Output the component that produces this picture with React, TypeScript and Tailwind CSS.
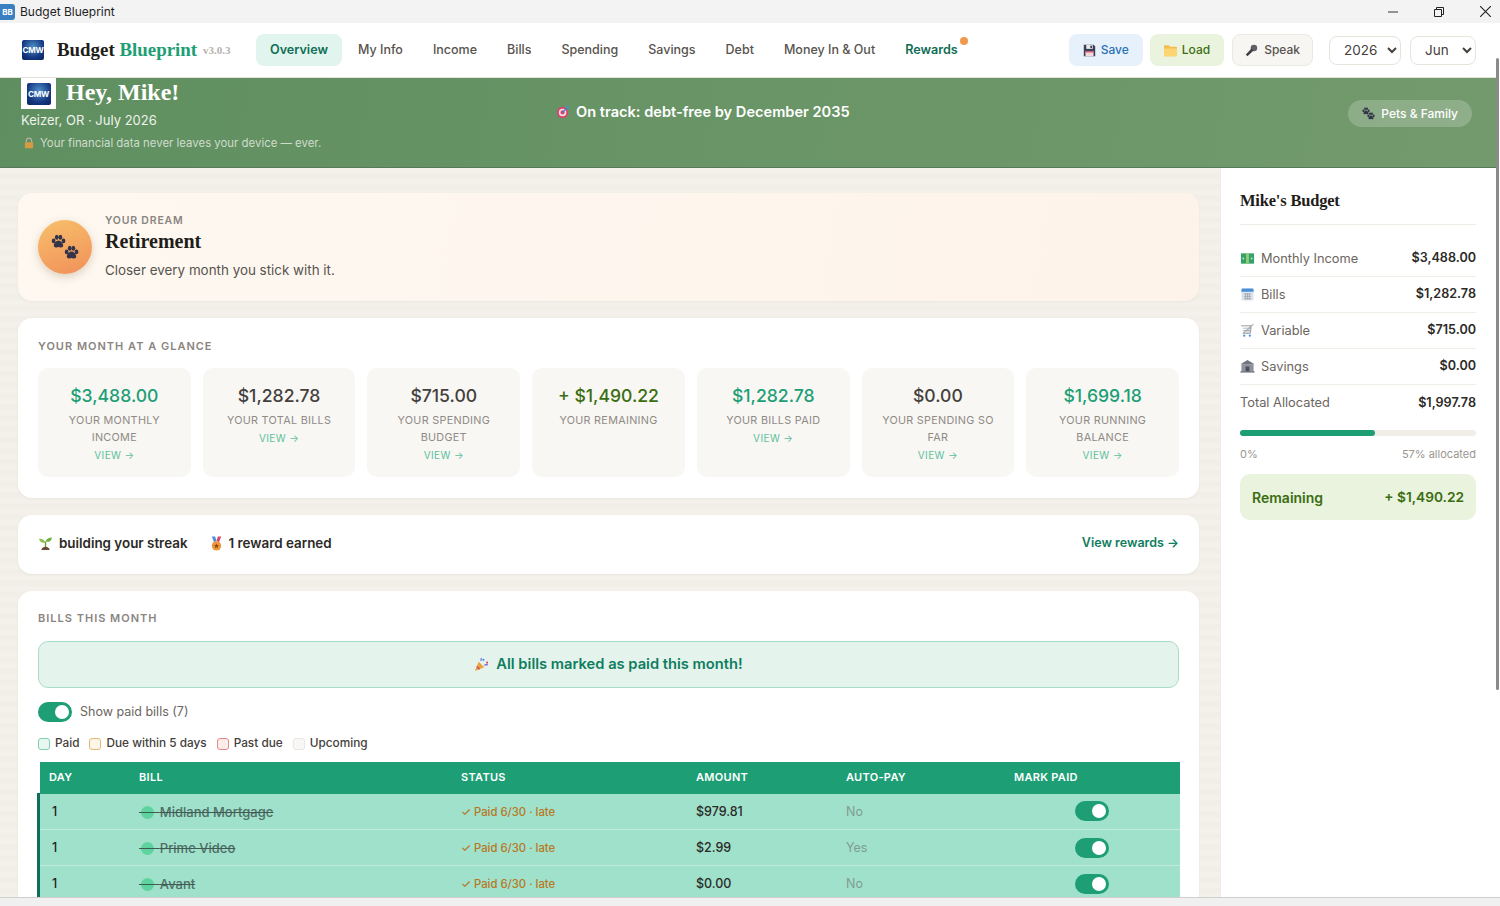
import type { ReactNode } from 'react';

const sans = 'font-[Inter,sans-serif]';
const serif = "font-['Liberation_Serif',serif]";

const navItems = ['My Info', 'Income', 'Bills', 'Spending', 'Savings', 'Debt', 'Money In & Out'];

const glance = [
  { value: '$3,488.00', label: 'YOUR MONTHLY INCOME', color: 'text-[#1d9e75]', view: true },
  { value: '$1,282.78', label: 'YOUR TOTAL BILLS', color: 'text-[#44403c]', view: true },
  { value: '$715.00', label: 'YOUR SPENDING BUDGET', color: 'text-[#44403c]', view: true },
  { value: '+ $1,490.22', label: 'YOUR REMAINING', color: 'text-[#3b6d11]', view: false },
  { value: '$1,282.78', label: 'YOUR BILLS PAID', color: 'text-[#1d9e75]', view: true },
  { value: '$0.00', label: 'YOUR SPENDING SO FAR', color: 'text-[#44403c]', view: true },
  { value: '$1,699.18', label: 'YOUR RUNNING BALANCE', color: 'text-[#1d9e75]', view: true },
];

const bills = [
  { name: 'Midland Mortgage', amount: '$979.81', auto: 'No' },
  { name: 'Prime Video', amount: '$2.99', auto: 'Yes' },
  { name: 'Avant', amount: '$0.00', auto: 'No' },
];

const Paw = ({ className, color = '#33344a' }: { className?: string; color?: string }) => (
  <svg viewBox="0 0 24 24" className={className} fill={color}>
    <ellipse cx="4.2" cy="11" rx="3" ry="3.8" />
    <ellipse cx="9.2" cy="5.2" rx="3" ry="4" />
    <ellipse cx="15" cy="5.2" rx="3" ry="4" />
    <ellipse cx="20" cy="11" rx="3" ry="3.8" />
    <path d="M12 10.5c-3.8 0-7.5 4.500-7.500 8 0 2.800 2.600 3.500 4.200 3 1-.3 2.200-.8 3.300-.8s2.300.5 3.300.8c1.600.5 4.200-.2 4.200-3 0-3.500-3.700-8-7.500-8z" />
  </svg>
);

const Paws = ({ size }: { size: 'sm' | 'lg' }) =>
  size === 'lg' ? (
    <span className="relative block h-[26px] w-[28px]">
      <Paw className="absolute left-0 top-0 h-[15px] w-[15px]" />
      <Paw className="absolute bottom-0 right-0 h-[15px] w-[15px]" />
    </span>
  ) : (
    <span className="relative block h-[13px] w-[13px]">
      <Paw className="absolute left-0 top-0 h-[8px] w-[8px]" />
      <Paw className="absolute bottom-0 right-0 h-[8px] w-[8px]" />
    </span>
  );

const CmwLogo = ({ className }: { className: string }) => (
  <div className={`flex items-center justify-center rounded-[2px] bg-[radial-gradient(circle_at_50%_35%,#4f8fc9,#12357f_65%,#0d2460)] ${className}`}>
    <span className={`${sans} text-[8px] font-bold leading-none tracking-[-0.3px] text-white`}>CMW</span>
  </div>
);

const Floppy = () => (
  <svg viewBox="0 0 16 16" className="h-[13px] w-[13px]">
    <path d="M1 1h12l2 2v12H1z" fill="#3a3f55" />
    <rect x="4" y="1" width="8" height="5" fill="#e8e8ee" />
    <rect x="9" y="2" width="2" height="3" fill="#3a3f55" />
    <rect x="3" y="9" width="10" height="6" fill="#f2d7dc" />
    <rect x="3" y="9" width="10" height="1.4" fill="#d9455f" />
  </svg>
);

const Folder = () => (
  <svg viewBox="0 0 16 16" className="h-[13px] w-[13px]">
    <path d="M0 2.500a1 1 0 0 1 1-1h5l1.500 2H15a1 1 0 0 1 1 1V14a1 1 0 0 1-1 1H1a1 1 0 0 1-1-1z" fill="#f5bd4f" />
    <path d="M0 5.500h16V14a1 1 0 0 1-1 1H1a1 1 0 0 1-1-1z" fill="#fcd471" />
  </svg>
);

const Mic = () => (
  <svg viewBox="0 0 16 16" className="h-[13px] w-[13px]">
    <circle cx="11" cy="5" r="4" fill="#5f5f68" />
    <path d="M8 5.500 1 13l2 2 7.500-7z" fill="#3f3f46" />
  </svg>
);

const Target = () => (
  <svg viewBox="0 0 16 16" className="h-[14px] w-[14px]">
    <circle cx="7.5" cy="8.500" r="6.500" fill="#d6456b" />
    <circle cx="7.5" cy="8.500" r="4.300" fill="#f5dfe6" />
    <circle cx="7.5" cy="8.500" r="2.400" fill="#d6456b" />
    <path d="M7.500 8.500 13 3" stroke="#3b82c4" strokeWidth="1.5" />
    <path d="M12 1.500l2.500 2.500" stroke="#3b9ae1" strokeWidth="2" />
  </svg>
);

const Lock = () => (
  <svg viewBox="0 0 16 16" className="h-[12px] w-[12px]">
    <path d="M4.500 7V5a3.500 3.500 0 0 1 7 0v2" fill="none" stroke="#b8b0a0" strokeWidth="1.5" />
    <rect x="2.5" y="7" width="11" height="8" rx="1" fill="#d69a45" />
  </svg>
);

const Money = () => (
  <svg viewBox="0 0 16 16" className="h-[15px] w-[15px]">
    <rect x="1" y="2.500" width="14" height="11" fill="#36a269" />
    <rect x="6.5" y="2.500" width="3" height="11" fill="#8fcf7c" />
    <circle cx="3.5" cy="8" r="1" fill="#b9e6c4" />
    <circle cx="12.5" cy="8" r="1" fill="#b9e6c4" />
  </svg>
);

const Calendar = () => (
  <svg viewBox="0 0 16 16" className="h-[15px] w-[15px]">
    <rect x="1.5" y="1.500" width="13" height="13" rx="1.5" fill="#dfe3ea" />
    <path d="M1.500 3a1.500 1.500 0 0 1 1.500-1.500h10A1.500 1.500 0 0 1 14.500 3v2h-13z" fill="#4a90d9" />
    <path d="M4 7.500h8M4 10h8M4 12.500h8M6 6.500v7M8 6.500v7M10 6.500v7" stroke="#9ca3af" strokeWidth="0.8" />
  </svg>
);

const Cart = () => (
  <svg viewBox="0 0 16 16" className="h-[15px] w-[15px]">
    <path d="M1 3h11l2.500-1.500M12 3l-1 8H3z" fill="#d6d9de" stroke="#9aa0a8" strokeWidth="1" />
    <path d="M3 5.500h9M3 8h8.500" stroke="#9aa0a8" strokeWidth="0.8" />
    <circle cx="4.5" cy="13.500" r="1.2" fill="#4a90d9" />
    <circle cx="10.5" cy="13.500" r="1.2" fill="#4a90d9" />
  </svg>
);

const Bank = () => (
  <svg viewBox="0 0 16 16" className="h-[15px] w-[15px]">
    <path d="M8 1 15.500 5.500H.5z" fill="#6f7480" />
    <rect x="1.5" y="5.500" width="13" height="8" fill="#8d929c" />
    <rect x="6" y="8" width="4" height="5.500" fill="#4b4f59" />
    <rect x="0.5" y="13" width="15" height="1.5" fill="#6f7480" />
  </svg>
);

const Seedling = () => (
  <svg viewBox="0 0 16 16" className="h-[15px] w-[15px]">
    <path d="M8 12V6" stroke="#6b9e3a" strokeWidth="1.5" />
    <path d="M8 7C6.500 3.500 3.500 3 1 3c.5 3 3 5 7 4z" fill="#8cc152" />
    <path d="M8 6c.8-3 3.500-4.500 7-4.500C14.500 5 12 7 8 6z" fill="#76b041" />
    <path d="M3.500 15c.5-2.500 2.500-3.500 4.500-3.500s4 1 4.500 3.500z" fill="#6b4a33" />
  </svg>
);

const Medal = () => (
  <svg viewBox="0 0 16 16" className="h-[15px] w-[15px]">
    <path d="M3 .5h3.500L8 5 5.500 7z" fill="#4a90d9" />
    <path d="M13 .5H9.500L8 5l2.500 2z" fill="#d6456b" />
    <circle cx="8" cy="10.500" r="5" fill="#f0963d" />
    <path d="M8 8l.8 1.700 1.800.2-1.300 1.300.3 1.800L8 12.100l-1.600.9.300-1.800-1.300-1.300 1.800-.2z" fill="#8a4e14" />
  </svg>
);

const Popper = () => (
  <svg viewBox="0 0 16 16" className="h-[15px] w-[15px]">
    <path d="M1 15 5 5l6 6z" fill="#e8a33d" />
    <path d="M3 10l3 3" stroke="#d6456b" strokeWidth="1.5" />
    <circle cx="10" cy="3" r="1.2" fill="#4a90d9" />
    <circle cx="14" cy="6" r="1.1" fill="#d6456b" />
    <path d="M7 4c1-1 1-2 .5-3M11 9c1-1 2.500-1 4-.5" fill="none" stroke="#7b5cd6" strokeWidth="1.2" />
  </svg>
);

const Toggle = () => (
  <span className="flex h-[20px] w-[34px] shrink-0 items-center justify-end rounded-full bg-[#1d9e75] pr-[3px]">
    <span className="h-[14px] w-[14px] rounded-full bg-white" />
  </span>
);

const Card = ({ className = '', children }: { className?: string; children: ReactNode }) => (
  <section className={`rounded-[14px] bg-white shadow-[0_1px_3px_rgba(60,50,30,0.05)] ${className}`}>{children}</section>
);

const SectionLabel = ({ children }: { children: ReactNode }) => (
  <div className="text-[11px] font-semibold leading-[14px] tracking-[1px] text-[#8a8580]">{children}</div>
);

const Legend = ({ border, fill, label }: { border: string; fill: string; label: string }) => (
  <span className="flex items-center gap-[5px]">
    <span className={`h-[12px] w-[12px] rounded-[3px] border-[1.5px] ${border} ${fill}`} />
    <span className="text-[11.8px] font-medium text-[#44403c]">{label}</span>
  </span>
);

const SideRow = ({ icon, label, value }: { icon?: ReactNode; label: string; value: string }) => (
  <div className="flex h-[36px] items-center justify-between border-b border-[#f1eee8] last:border-b-0">
    <span className="flex items-center gap-[6px] text-[12.8px] text-[#6b6560]">
      {icon}
      {label}
    </span>
    <span className="text-[12.6px] font-semibold text-[#2c2a26]">{value}</span>
  </div>
);

export default function App() {
  return (
    <div className={`${sans} flex h-[906px] w-[1500px] flex-col overflow-hidden bg-white text-[#2c2a26]`}>
      {/* window title bar */}
      <div className="flex h-[23px] shrink-0 items-center justify-between bg-[#f3f3f3]">
        <div className="flex items-center gap-[5px]">
          <span className="flex h-[16px] w-[15px] items-center justify-center rounded-r-[3px] bg-[#3a7fc1] text-[8px] font-bold text-white">BB</span>
          <span className="text-[12px] text-[#1f1f1f]">Budget Blueprint</span>
        </div>
        <div className="flex items-center gap-[36px] pr-[9px]">
          <svg viewBox="0 0 10 10" className="h-[10px] w-[10px]"><path d="M0 5h10" stroke="#333" strokeWidth="1" /></svg>
          <svg viewBox="0 0 10 10" className="h-[10px] w-[10px]"><path d="M.5 2.500h7v7h-7zM2.500 2.500v-2h7v7h-2" fill="none" stroke="#222" strokeWidth="1" /></svg>
          <svg viewBox="0 0 10 10" className="h-[11px] w-[11px]"><path d="M0 0l10 10M10 0 0 10" stroke="#222" strokeWidth="1" /></svg>
        </div>
      </div>

      <div className="flex min-h-0 flex-1">
        <div className="flex min-w-0 flex-1 flex-col">
          {/* nav */}
          <header className="flex h-[55px] shrink-0 items-center border-b border-[#e4e2da] bg-white pl-[22px] pr-[20px]">
            <CmwLogo className="h-[20px] w-[22px]" />
            <span className={`${serif} ml-[13px] w-[146px] whitespace-nowrap text-[18.9px] font-bold leading-none text-[#1f1d1a]`}>
              Budget <span className="text-[#1d9e75]">Blueprint</span>
            </span>
            <span className={`${serif} w-[53px] text-[11px] font-bold text-[#b5b1ab]`}>v3.0.3</span>
            <nav className="flex items-center gap-[2px]">
              <a className="flex h-[32px] items-center rounded-[8px] bg-[#e1f5ee] px-[14px] text-[12.6px] font-semibold text-[#0f6e56]">Overview</a>
              {navItems.map((item) => (
                <a key={item} className="flex h-[32px] items-center px-[14px] text-[12.5px] font-medium text-[#57534e]">{item}</a>
              ))}
              <a className="relative flex h-[32px] items-center px-[14px] text-[12.6px] font-semibold text-[#0f6e56]">
                Rewards
                <span className="absolute right-[4px] top-[3px] h-[8px] w-[8px] rounded-full bg-[#f0994b]" />
              </a>
            </nav>
            <div className="ml-auto flex items-center">
              <button className="flex h-[32px] items-center gap-[5px] rounded-[8px] bg-[#e6f1fb] px-[14px] text-[12px] font-medium text-[#2a72b5]"><Floppy />Save</button>
              <button className="ml-[7px] flex h-[32px] items-center gap-[5px] rounded-[8px] bg-[#eaf3de] px-[14px] text-[12px] font-medium text-[#3b6d11]"><Folder />Load</button>
              <button className="ml-[8px] flex h-[32px] items-center gap-[6px] rounded-[8px] border border-[#ece9e2] bg-[#f7f6f3] px-[12px] text-[12px] font-medium text-[#57534e]"><Mic />Speak</button>
              <select defaultValue="2026" className="ml-[16px] h-[29px] w-[72px] rounded-[8px] border border-[#e7e4dc] bg-white pl-[10px] text-[13.5px] text-[#44403c]"><option>2026</option></select>
              <select defaultValue="Jun" className="ml-[9px] h-[29px] w-[66px] rounded-[8px] border border-[#e7e4dc] bg-white pl-[10px] text-[13.5px] text-[#44403c]"><option>Jun</option></select>
            </div>
          </header>

          {/* hero */}
          <div className="flex h-[90px] shrink-0 items-center border-b border-[#55795a] bg-[linear-gradient(100deg,#5f8f60,#739a6d)] pl-[21px] pr-[24px] text-white">
            <div className="w-[535px] self-start">
              <div className="flex items-start">
                <div className="flex h-[31px] w-[35px] items-center justify-center bg-white">
                  <CmwLogo className="h-[22px] w-[24px]" />
                </div>
                <span className={`${serif} ml-[10px] text-[24px] font-bold leading-[28px]`}>Hey, Mike!</span>
              </div>
              <div className="mt-[3px] text-[13px] leading-[16px] text-[#eef3ec]">Keizer, OR · July 2026</div>
              <div className="mt-[8px] flex items-center gap-[5px] pl-[2px] text-[11.4px] leading-[14px] text-[#cfdccb]"><Lock />Your financial data never leaves your device — ever.</div>
            </div>
            <div className="-mt-[20px] flex items-center gap-[6px] text-[14.6px] font-semibold"><Target />On track: debt-free by December 2035</div>
            <div className="ml-auto -mt-[18px] flex h-[27px] items-center gap-[6px] rounded-full bg-white/20 px-[14px] text-[12px] font-medium"><Paws size="sm" />Pets &amp; Family</div>
          </div>

          <div className="flex min-h-0 flex-1">
            {/* main column */}
            <main className="flex min-w-0 flex-1 flex-col gap-[17px] overflow-hidden bg-[repeating-linear-gradient(180deg,#f4f1eb_0px,#f4f1eb_5px,#f1eee7_6px,#f2efe9_11px)] pl-[18px] pr-[21px] pt-[25px]">
              <Card className="flex h-[108px] shrink-0 items-center gap-[13px] bg-[linear-gradient(100deg,#fef8f1,#fef3ea)] pl-[20px]">
                <div className="flex h-[54px] w-[54px] items-center justify-center rounded-full bg-[linear-gradient(160deg,#f8c06a,#f0905a)] shadow-[0_3px_8px_rgba(120,90,40,0.25)]">
                  <Paws size="lg" />
                </div>
                <div className="mb-[2px]">
                  <div className="text-[10.5px] font-semibold leading-[14px] tracking-[0.8px] text-[#8a8580]">YOUR DREAM</div>
                  <div className={`${serif} mt-[1px] text-[20px] font-bold leading-[24px] text-[#1f1d1a]`}>Retirement</div>
                  <div className="mt-[8px] text-[13.4px] leading-[18px] text-[#57534e]">Closer every month you stick with it.</div>
                </div>
              </Card>

              <Card className="h-[180px] shrink-0 px-[20px] pt-[21px]">
                <SectionLabel>YOUR MONTH AT A GLANCE</SectionLabel>
                <div className="mt-[15px] grid grid-cols-7 gap-[12px]">
                  {glance.map((item, i) => (
                    <div key={i} className="flex h-[109px] flex-col items-center rounded-[10px] bg-[#f8f7f4] px-[14px] pt-[16px] text-center">
                      <div className={`text-[17.6px] font-medium leading-[24px] ${item.color}`}>{item.value}</div>
                      <div className="mt-[4px] text-[10.8px] leading-[17px] tracking-[0.3px] text-[#8f8a84]">{item.label}</div>
                      {item.view && <div className="mt-[1px] text-[10px] leading-[17px] tracking-[0.4px] text-[#5dc09d]">VIEW →</div>}
                    </div>
                  ))}
                </div>
              </Card>

              <Card className="flex h-[59px] shrink-0 items-center justify-between px-[20px] pb-[2px]">
                <div className="flex items-center text-[13.4px] font-semibold text-[#2c2a26]">
                  <span className="flex items-center gap-[6px]"><Seedling />building your streak</span>
                  <span className="ml-[21px] flex items-center gap-[5px]"><Medal />1 reward earned</span>
                </div>
                <span className="text-[12.5px] font-semibold text-[#0f7d5f]">View rewards →</span>
              </Card>

              <Card className="shrink-0 rounded-b-none px-[20px] pt-[20px]">
                <SectionLabel>BILLS THIS MONTH</SectionLabel>
                <div className="mt-[16px] flex h-[47px] items-center justify-center gap-[7px] rounded-[10px] border border-[#a8ddc8] bg-[#e4f4ec] text-[14.7px] font-semibold text-[#0f7d5f]">
                  <Popper />All bills marked as paid this month!
                </div>
                <div className="mt-[14px] flex items-center gap-[8px]">
                  <Toggle />
                  <span className="text-[12.5px] text-[#6b6560]">Show paid bills (7)</span>
                </div>
                <div className="mt-[13px] flex items-center gap-[10px]">
                  <Legend border="border-[#7fcfb2]" fill="bg-[#e9f7f1]" label="Paid" />
                  <Legend border="border-[#e2b673]" fill="bg-[#fdf5e6]" label="Due within 5 days" />
                  <Legend border="border-[#e58a86]" fill="bg-[#fdecea]" label="Past due" />
                  <Legend border="border-[#e9e7e2]" fill="bg-[#f8f7f5]" label="Upcoming" />
                </div>
                <table className="ml-[2px] mt-[9px] w-[1140px] table-fixed border-collapse text-left">
                  <colgroup>
                    <col className="w-[90px]" />
                    <col className="w-[322px]" />
                    <col className="w-[235px]" />
                    <col className="w-[150px]" />
                    <col className="w-[168px]" />
                    <col className="w-[175px]" />
                  </colgroup>
                  <thead>
                    <tr className="h-[32px] bg-[#1d9e75] text-[11px] font-semibold tracking-[0.3px] text-white">
                      <th className="pl-[9px] font-semibold">DAY</th>
                      <th className="pl-[9px] font-semibold">BILL</th>
                      <th className="pl-[9px] font-semibold">STATUS</th>
                      <th className="pl-[9px] font-semibold">AMOUNT</th>
                      <th className="pl-[9px] font-semibold">AUTO-PAY</th>
                      <th className="pl-[9px] font-semibold">MARK PAID</th>
                    </tr>
                  </thead>
                  <tbody>
                    {bills.map((bill) => (
                      <tr key={bill.name} className="h-[36px] border-b-[1.5px] border-[#c4ecdd] bg-[#9fe1cb] text-[12.5px]">
                        <td className="relative pl-[12px] pt-[2px] font-medium text-[#1f1d1a]">
                          <span className="absolute -left-[3px] -top-px h-[37px] w-[3px] bg-[#0f6e56]" />
                          1
                        </td>
                        <td className="pl-[9px] pt-[2px] text-[#4f6f66]">
                          <span className="relative inline-block">
                            <span className="absolute left-[2px] top-[3px] h-[13px] w-[13px] rounded-full bg-[#5fd39f]" />
                            <span className="relative text-[13px] font-medium line-through decoration-[#3f5c53]">{'\u00a0\u00a0\u00a0\u00a0\u00a0\u00a0'}{bill.name}</span>
                          </span>
                        </td>
                        <td className="pl-[9px] pt-[2px] text-[11.3px] font-medium text-[#b9771f]">✓ Paid 6/30 · late</td>
                        <td className="pl-[9px] pt-[2px] font-medium text-[#2c2a26]">{bill.amount}</td>
                        <td className="pl-[9px] pt-[2px] text-[#7f9c92]">{bill.auto}</td>
                        <td className="pr-[2px]">
                          <div className="flex justify-center"><Toggle /></div>
                        </td>
                      </tr>
                    ))}
                  </tbody>
                </table>
              </Card>
            </main>

            {/* sidebar */}
            <aside className="w-[276px] shrink-0 border-l border-[#efece6] bg-white pl-[19px] pr-[20px] pt-[22px]">
              <div className={`${serif} text-[16.5px] font-bold leading-[22px] tracking-[-0.2px] text-[#1f1d1a]`}>Mike's Budget</div>
              <div className="mt-[12px] border-t border-[#efece6]" />
              <div className="mt-[16px]">
                <SideRow icon={<Money />} label="Monthly Income" value="$3,488.00" />
                <SideRow icon={<Calendar />} label="Bills" value="$1,282.78" />
                <SideRow icon={<Cart />} label="Variable" value="$715.00" />
                <SideRow icon={<Bank />} label="Savings" value="$0.00" />
                <SideRow label="Total Allocated" value="$1,997.78" />
              </div>
              <div className="mt-[9px] h-[6px] rounded-full bg-[#f1eee8]">
                <div className="h-full rounded-full bg-[#1d9e75]" style={{ width: '57%' }} />
              </div>
              <div className="mt-[10px] flex justify-between text-[11px] leading-[16px] text-[#9b9690]">
                <span>0%</span>
                <span>57% allocated</span>
              </div>
              <div className="mt-[12px] flex h-[46px] items-center justify-between rounded-[10px] bg-[#eaf3de] px-[12px] text-[#3b6d11]">
                <span className="text-[14px] font-semibold">Remaining</span>
                <span className="text-[13.7px] font-semibold">+ $1,490.22</span>
              </div>
            </aside>
          </div>
        </div>

        {/* page scrollbar */}
        <div className="w-[4px] shrink-0 bg-white pt-[35px]">
          <div className="h-[632px] w-[3px] rounded-full bg-[#8a8a8a]" />
        </div>
      </div>

      {/* window bottom edge */}
      <div className="h-[9px] shrink-0 border-t border-[#cfcfcf] bg-[#f0f0f0]" />
    </div>
  );
}
